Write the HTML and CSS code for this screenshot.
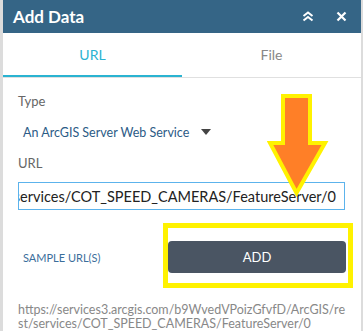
FILE: index.html
```html
<!DOCTYPE html>
<html lang="en">
<head>
  <meta charset="UTF-8" />
  <title>Add Data</title>
  <link rel="stylesheet" href="styles.css">
</head>
<body>
  <div class="panel">
    <div class="panel-header">
      <h1 class="panel-title">Add Data</h1>
      <div class="panel-tools">
        <svg width="12" height="11" viewBox="0 0 12 11"><path d="M1.5 5 L6 1.5 L10.5 5 M1.5 9.5 L6 6 L10.5 9.5" fill="none" stroke="#fff" stroke-width="2"/></svg>
        <svg width="11" height="11" viewBox="0 0 11 11"><path d="M1.5 1.5 L9.5 9.5 M9.5 1.5 L1.5 9.5" fill="none" stroke="#fff" stroke-width="2.2"/></svg>
      </div>
    </div>

    <div class="tabs">
      <div class="tab active">URL</div>
      <div class="tab">File</div>
    </div>

    <div class="panel-body">
      <div class="field-label">Type</div>
      <div class="select">
        <span>An ArcGIS Server Web Service</span>
        <span class="caret"></span>
      </div>

      <div class="field-label">URL</div>
      <div class="url-input">
        <span class="url-value">services/COT_SPEED_CAMERAS/FeatureServer/0</span><span class="cursor"></span>
      </div>

      <div class="actions">
        <span class="sample-link">SAMPLE URL(S)</span>
        <button class="add-button">ADD</button>
      </div>

      <div class="url-preview">https://services3.arcgis.com/b9WvedVPoizGfvfD/ArcGIS/rest/services/COT_SPEED_CAMERAS/FeatureServer/0</div>
    </div>

    <div class="highlight-box"></div>
    <svg class="pointer-arrow" width="62" height="104" viewBox="0 0 62 104">
      <path d="M16 3 L43 3 L43 50 L58 50 L29.5 100 L3 50 L16 50 Z" fill="#ff7f27" stroke="#fff200" stroke-width="4" stroke-linejoin="miter"/>
    </svg>
  </div>
</body>
</html>
```

FILE: styles.css
```css
body {
  margin: 0;
  padding: 0;
  background: #dcdcdc;
  font-family: 'Lato', sans-serif;
}

.panel {
  position: relative;
  width: 358px;
  height: 331px;
  margin-left: 3px;
  background: #fff;
  overflow: hidden;
}

.panel-header {
  height: 33px;
  background: #356586;
  display: flex;
  align-items: center;
  justify-content: space-between;
  padding: 0 14px 0 10px;
}

.panel-title {
  margin: 0;
  color: #fff;
  font-size: 17px;
  font-weight: 700;
}

.panel-tools {
  display: flex;
  align-items: center;
  gap: 22px;
}

.tabs {
  display: flex;
  height: 44px;
  border-bottom: 1px solid #e0e0e0;
}

.tab {
  flex: 1;
  display: flex;
  align-items: center;
  justify-content: center;
  font-size: 14px;
  color: #888;
  border-bottom: 2px solid transparent;
}

.tab.active {
  color: #2ab3d1;
  border-bottom-color: #2ab3d1;
}

.panel-body {
  padding: 14px 16px 0 15px;
}

.field-label {
  font-size: 13px;
  color: #666;
  line-height: 18px;
}

.select {
  display: flex;
  align-items: center;
  gap: 12px;
  padding: 13px 0 0 5px;
  height: 18px;
  margin-bottom: 13px;
  font-size: 12.5px;
  color: #2c5b86;
}

.caret {
  width: 0;
  height: 0;
  border-left: 5px solid transparent;
  border-right: 5px solid transparent;
  border-top: 6px solid #444;
}

.url-input {
  margin-top: 10px;
  height: 26px;
  border: 1px solid #5cb3ec;
  display: flex;
  align-items: center;
  justify-content: flex-end;
  overflow: hidden;
  padding-right: 8px;
  font-size: 14.5px;
  color: #222;
  white-space: nowrap;
}

.cursor {
  display: inline-block;
  width: 1px;
  height: 17px;
  background: #000;
}

.actions {
  display: flex;
  align-items: center;
  justify-content: space-between;
  margin-top: 31px;
  padding-left: 5px;
}

.sample-link {
  font-size: 11px;
  color: #3b6e9b;
}

.add-button {
  width: 178px;
  height: 32px;
  margin-right: -1px;
  border: none;
  border-radius: 4px;
  background: #4a5563;
  color: #fff;
  font-family: 'Lato', sans-serif;
  font-size: 13px;
}

.url-preview {
  margin-top: 30px;
  font-size: 12.5px;
  line-height: 13.5px;
  color: #888;
  word-break: break-all;
}

.highlight-box {
  position: absolute;
  left: 160px;
  top: 223px;
  width: 180px;
  height: 55px;
  border: 5px solid #fff200;
}

.pointer-arrow {
  position: absolute;
  left: 264px;
  top: 93px;
}
```
